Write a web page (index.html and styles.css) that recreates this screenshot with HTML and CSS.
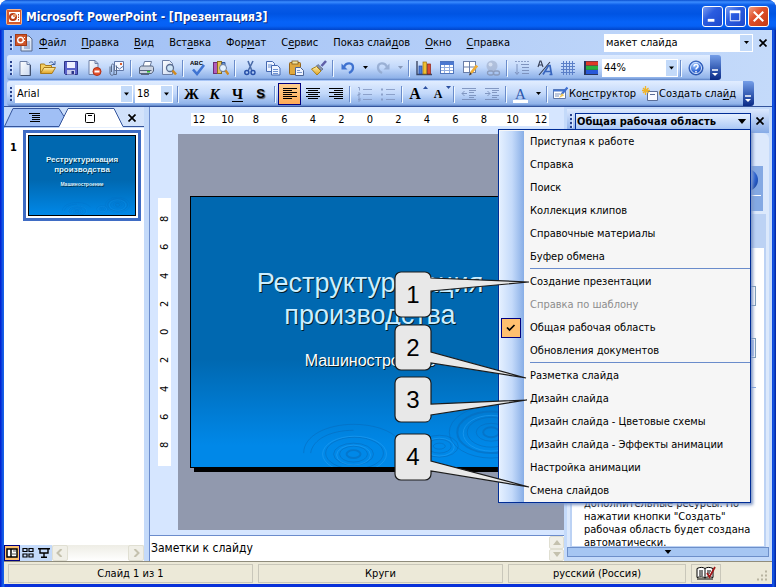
FILE: index.html
```html
<!DOCTYPE html>
<html lang="ru">
<head>
<meta charset="utf-8">
<title>Microsoft PowerPoint - [Презентация3]</title>
<link rel="stylesheet" href="styles.css">
</head>
<body>
<svg class="defs" aria-hidden="true">
  <defs>
    <linearGradient id="paper" x1="0" y1="0" x2="1" y2="1"><stop offset="0" stop-color="#fff"/><stop offset="1" stop-color="#c9d8f0"/></linearGradient>
    <linearGradient id="gold" x1="0" y1="0" x2="0" y2="1"><stop offset="0" stop-color="#fff0a8"/><stop offset="1" stop-color="#e0a020"/></linearGradient>
    <radialGradient id="ball" cx=".4" cy=".3" r=".8"><stop offset="0" stop-color="#9cc4ff"/><stop offset=".6" stop-color="#2c62d0"/><stop offset="1" stop-color="#123c98"/></radialGradient>
    <symbol id="down" viewBox="0 0 5 3"><path d="M0 0h5L2.500 3z"/></symbol>
    <symbol id="close" viewBox="0 0 8 8"><path d="M.5.5l7 7M7.500.5l-7 7" stroke="#000" stroke-width="1.700"/></symbol>
    <symbol id="ripples" viewBox="0 0 360 272" preserveAspectRatio="none">
      <g fill="none" stroke="#0869b8" stroke-opacity=".55">
        <ellipse cx="163" cy="259" rx="7" ry="4" stroke-width="2"/><ellipse cx="163" cy="259" rx="14" ry="8"/><ellipse cx="163" cy="259" rx="20" ry="11"/><ellipse cx="164" cy="258" rx="29" ry="16"/>
        <path d="M113 258c0-18 24-29 50-29 20 0 38 6 46 16"/><path d="M120 258c2-14 20-23 43-23"/>
        <ellipse cx="249" cy="251" rx="6" ry="3"/><ellipse cx="249" cy="251" rx="12" ry="7"/><ellipse cx="249" cy="251" rx="19" ry="11"/>
        <ellipse cx="301" cy="237" rx="8" ry="5" stroke-width="2"/><ellipse cx="301" cy="237" rx="15" ry="9"/><ellipse cx="301" cy="237" rx="24" ry="15"/><ellipse cx="301" cy="237" rx="34" ry="21" stroke-width="2"/><ellipse cx="301" cy="237" rx="42" ry="26"/>
      </g>
      <g fill="none" stroke="#2ba2f5" stroke-opacity=".5">
        <ellipse cx="163" cy="260" rx="17" ry="10"/><ellipse cx="164" cy="259" rx="32" ry="18"/><ellipse cx="301" cy="238" rx="28" ry="18"/><ellipse cx="249" cy="252" rx="15" ry="9"/>
      </g>
    </symbol>
  </defs>
</svg>

<div class="window">
  <header class="titlebar">
    <svg class="app-icon" viewBox="0 0 16 16"><rect x=".5" y=".5" width="15" height="15" rx="1" fill="#d65a2c" stroke="#f6b68c"/><rect x="3" y="3" width="11" height="10" fill="#fff"/><circle cx="7" cy="8" r="3" fill="#fff" stroke="#b63c18" stroke-width="2"/><path d="M7 8V5h3v3z" fill="#e89060"/><path d="M12.500 5v1.500M12.500 7.500V9M12.500 10v1.500" stroke="#b63c18"/></svg>
    <h1>Microsoft PowerPoint - [Презентация3]</h1>
    <div class="window-buttons">
      <button aria-label="Свернуть"><svg viewBox="0 0 20 20"><path d="M5 14h7" stroke="#fff" stroke-width="3"/></svg></button>
      <button aria-label="Развернуть"><svg viewBox="0 0 20 20"><path d="M4.500 4v10.500h10V4" fill="none" stroke="#fff"/><path d="M4 5h11" stroke="#fff" stroke-width="3"/></svg></button>
      <button class="quit" aria-label="Закрыть"><svg viewBox="0 0 20 20"><path d="M5 5l10 10M15 5L5 15" stroke="#fff" stroke-width="2.200"/></svg></button>
    </div>
  </header>

  <nav class="menubar">
    <i class="grip"></i>
    <svg class="doc-icon" viewBox="0 0 18 18"><path d="M6 2h8l3 3v12H6z" fill="url(#paper)" stroke="#56688c"/><path d="M9 12h6M9 14h6M12 8h3M12 10h3" stroke="#7088b8"/><rect x=".5" y=".5" width="11" height="11" fill="#cf5428" stroke="#a23a18"/><circle cx="5.500" cy="6" r="2.800" fill="none" stroke="#fff" stroke-width="1.400"/><path d="M9.500 3v1M9.500 6v1" stroke="#fff"/></svg>
    <div class="menus">
      <button><u>Ф</u>айл</button><button><u>П</u>равка</button><button><u>В</u>ид</button><button>Вст<u>а</u>вка</button><button>Фор<u>м</u>ат</button><button>С<u>е</u>рвис</button><button>Показ слай<u>д</u>ов</button><button><u>О</u>кно</button><button><u>С</u>правка</button>
    </div>
    <span class="combo ask"><input type="text" value="макет слайда" aria-label="Введите вопрос"><button aria-label="Открыть список"><svg class="arrow"><use href="#down"/></svg></button></span>
    <button class="close" aria-label="Закрыть окно"><svg><use href="#close"/></svg></button>
  </nav>

  <div class="toolbar">
    <div class="strip">
      <i class="grip"></i>
      <button aria-label="Создать"><svg viewBox="0 0 16 16"><path d="M3 1.500h7l3 3v11H3z" fill="url(#paper)" stroke="#6c7fa6"/><path d="M10 1.500v3h3" fill="#dfe8f8" stroke="#6c7fa6"/><path d="M13.500 5v10.500H4" fill="none" stroke="#40506e"/></svg></button>
      <button aria-label="Открыть"><svg viewBox="0 0 16 16"><path d="M.5 13V4h4l1 1.500h6V8" fill="#f4cf62" stroke="#a87a1c"/><path d="M.5 13.500L4 7.500h11.500L12 13.500z" fill="url(#gold)" stroke="#a87a1c"/><path d="M9 3c2-2 4-1 5 1m1-3v3.500h-3.500" fill="none" stroke="#3c5c9c"/></svg></button>
      <button aria-label="Сохранить"><svg viewBox="0 0 16 16"><path d="M1.500 1.500h13v13h-12l-1-1z" fill="#5a62c8" stroke="#2c3488"/><rect x="4" y="2" width="8" height="6" fill="#eef0ff"/><rect x="4" y="10" width="8" height="4.500" fill="#c8ccec"/><rect x="8.500" y="11" width="2.500" height="3" fill="#2c3488"/></svg></button>
      <button aria-label="Разрешения"><svg viewBox="0 0 16 16"><path d="M3 .5h6l3 3v11H3z" fill="url(#paper)" stroke="#6c7fa6"/><path d="M9 .5v3h3" fill="none" stroke="#6c7fa6"/><circle cx="11" cy="11.500" r="4" fill="#e4502c" stroke="#b03014"/><path d="M8.500 11.500h5" stroke="#fff" stroke-width="2"/></svg></button>
      <button aria-label="Сообщение"><svg viewBox="0 0 16 16"><path d="M5.500 1.500h9v9h-9z" fill="#f4f7ff" stroke="#6078a8"/><rect x="11" y="3" width="2" height="2" fill="#d86030"/><path d="M6.500 6l4 3 4-3" fill="none" stroke="#6078a8"/><path d="M1 6.500v6.500c0 3 4 3 4 0V5.500c0-2-2.500-2-2.500 0V12M5 14.500h2.500V5.500" fill="none" stroke="#596a88"/></svg></button>
      <i class="sep"></i>
      <button aria-label="Печать"><svg viewBox="0 0 16 16"><path d="M5 6.500L6.500 1.500h7L12 6.500" fill="#fff" stroke="#66789c"/><path d="M1.500 7.500l2-1.500h11l1 1.500V11l-2 2.500h-12z" fill="#ccd4e2" stroke="#56647e"/><path d="M2 10.500h11.500" stroke="#56647e"/><rect x="9" y="11" width="3" height="1.500" fill="#35c030"/><path d="M3 14.500h8" stroke="#56647e"/></svg></button>
      <button aria-label="Просмотр"><svg viewBox="0 0 16 16"><path d="M1.500.5h7l3 3v11h-10z" fill="url(#paper)" stroke="#6c7fa6"/><circle cx="9" cy="8" r="3.500" fill="#cfe6f8" stroke="#5a6c90" stroke-width="1.300"/><path d="M11.500 10.500l3.500 4" stroke="#d08a20" stroke-width="2.600"/></svg></button>
      <i class="sep"></i>
      <button aria-label="Орфография"><svg viewBox="0 0 16 16"><text x="0" y="5" class="abc">ABC</text><path d="M3 9.500l4 4.500 7-9" fill="none" stroke="#3f74d2" stroke-width="2.600"/></svg></button>
      <button aria-label="Справочные материалы"><svg viewBox="0 0 16 16"><rect x=".5" y="2.500" width="4" height="11" fill="#b25cb8" stroke="#6c2c78"/><rect x="4.500" y="1.500" width="4" height="12" fill="#e6c35c" stroke="#8c6c18"/><path d="M9 2.500h3v9H9z" fill="#6c98dc" stroke="#345a9c"/><circle cx="10" cy="8" r="3.500" fill="#e4f2ff" stroke="#6d7e9c"/><path d="M12.500 10.500l3 4" stroke="#d08a20" stroke-width="2.400"/></svg></button>
      <i class="sep"></i>
      <button aria-label="Вырезать"><svg viewBox="0 0 16 16"><path d="M6 1l4 10M11 1L6 11" stroke="#4c6ca8" stroke-width="1.600"/><circle cx="4.800" cy="12.500" r="2" fill="none" stroke="#2850a8" stroke-width="1.500"/><circle cx="11" cy="12.500" r="2" fill="none" stroke="#2850a8" stroke-width="1.500"/></svg></button>
      <button aria-label="Копировать"><svg viewBox="0 0 16 16"><path d="M1.500 1.500h6l2 2v8h-8z" fill="#eef4ff" stroke="#4468b0"/><path d="M3 5h4M3 7h4" stroke="#6c90d0"/><path d="M6.500 5.500h6l2.500 2.500v7H6.500z" fill="#eef4ff" stroke="#4468b0"/><path d="M8 9.500h5M8 11.500h5M8 13.500h5" stroke="#6c90d0"/></svg></button>
      <button aria-label="Вставить"><svg viewBox="0 0 16 16"><rect x="1.500" y="2.500" width="11" height="12" rx="1" fill="#e0a83c" stroke="#94641c"/><rect x="4" y="1" width="6" height="3" fill="#f4e6a0" stroke="#7c5a20" stroke-width=".8"/><path d="M7.500 7.500h5l3 3v5h-8z" fill="#edf3ff" stroke="#4c6494"/><path d="M9 10.500h3M9 12.500h5" stroke="#7c98cc"/></svg></button>
      <button aria-label="Формат по образцу"><svg viewBox="0 0 16 16"><path d="M15 1l-4.500 5" stroke="#5f5fa8" stroke-width="2.600"/><path d="M7 4.500l5 4.500-1.500 1.500L5.500 6z" fill="#8893ac" stroke="#56607c" stroke-width=".7"/><path d="M5.500 6.500l4.500 4.500-4 4L.5 9z" fill="url(#gold)" stroke="#a8821c"/></svg></button>
      <i class="sep"></i>
      <button aria-label="Отменить"><svg viewBox="0 0 16 16"><path d="M4 7c2-5 9-5 9 .5 0 3-2 4.500-4 5.500" fill="none" stroke="#3f72d0" stroke-width="2.300"/><path d="M1.500 3.500v6h6z" fill="#3f72d0"/></svg></button>
      <button class="drop" aria-label="Список отмены"><svg class="arrow"><use href="#down"/></svg></button>
      <button class="dim" aria-label="Вернуть"><svg viewBox="0 0 16 16"><path d="M12 7c-2-5-9-5-9 .5 0 3 2 4.500 4 5.500" fill="none" stroke="#8fa6cc" stroke-width="2.300"/><path d="M14.500 3.500v6h-6z" fill="#8fa6cc"/></svg></button>
      <button class="drop dim" aria-label="Список возврата"><svg class="arrow"><use href="#down"/></svg></button>
      <i class="sep"></i>
      <button aria-label="Диаграмма"><svg viewBox="0 0 16 16"><path d="M1 1v13.500h15" fill="none" stroke="#3b4664" stroke-width="1.400"/><rect x="3" y="6" width="3" height="8" fill="#4a7cdc" stroke="#254a98" stroke-width=".7"/><rect x="7" y="2" width="3.500" height="12" fill="#f0c030" stroke="#987010" stroke-width=".7"/><rect x="11.500" y="4" width="3" height="10" fill="#dc4c30" stroke="#902010" stroke-width=".7"/></svg></button>
      <button aria-label="Таблица"><svg viewBox="0 0 16 16"><rect x="1.500" y="1.500" width="13" height="12" fill="#fff" stroke="#4f75bd"/><path d="M1 3.500h14" stroke="#4b78d0" stroke-width="3"/><path d="M2 7.500h12M2 10.500h12M5.500 5v8M10.500 5v8" stroke="#8fabdf"/></svg></button>
      <button aria-label="Таблицы и границы"><svg viewBox="0 0 16 16"><rect x="1.500" y="1.500" width="12" height="11" fill="#fff" stroke="#6a7ea8"/><path d="M7.500 1v12M1 7h13" stroke="#6a7ea8"/><path d="M15 5.500L9 13" stroke="#efac34" stroke-width="2.800"/><path d="M7 15.500l1-3 2 1.500z" fill="#443018"/></svg></button>
      <button class="dim" aria-label="Гиперссылка"><svg viewBox="0 0 16 16"><circle cx="7" cy="6" r="5.500" fill="#a9b8d4"/><circle cx="5.500" cy="4.500" r="2" fill="#d6dfef"/><rect x="2.500" y="11" width="6" height="4" rx="2" fill="none" stroke="#8492b0" stroke-width="1.300"/><rect x="8.500" y="11" width="6" height="4" rx="2" fill="none" stroke="#8492b0" stroke-width="1.300"/></svg></button>
      <i class="sep"></i>
      <button aria-label="Развернуть все"><svg viewBox="0 0 16 16"><path d="M1 1.500h14" stroke="#8ca0c8" stroke-dasharray="2 1"/><path d="M3 4v10M1 12l2 2.500 2-2.500M7 4.500h8M8 7.500h7M8 10.500h7M8 13.500h7" fill="none" stroke="#7e93be"/></svg></button>
      <button aria-label="Показать форматирование"><svg viewBox="0 0 16 16"><path d="M1 7l2-6h1l2 6M2 5h3M2 15L13 2" fill="none" stroke="#333c54" stroke-width="1.100"/><path d="M6 14.500l5.500-9h1.500l1.500 9M8 11.500h6M12.500 14.500h3" fill="none" stroke="#3765be" stroke-width="1.700"/></svg></button>
      <button aria-label="Сетка"><svg viewBox="0 0 16 16"><path d="M3.500 1v14M6.500 1v14M9.500 1v14M12.500 1v14M1 3.500h14M1 6.500h14M1 9.500h14M1 12.500h14" stroke="#5b7fc8"/></svg></button>
      <button aria-label="Цвет и оттенки серого"><svg viewBox="0 0 16 16"><rect x="1" y="1" width="14" height="14" fill="#26355c"/><path d="M3 3.500h12" stroke="#e03828" stroke-width="4"/><path d="M3 7.800h12" stroke="#28b040" stroke-width="4"/><path d="M3 12h12" stroke="#2858d8" stroke-width="4"/></svg></button>
      <span class="combo zoom"><select aria-label="Масштаб"><option>44%</option></select><svg class="arrow"><use href="#down"/></svg></span>
      <i class="sep"></i>
      <button aria-label="Справка"><svg viewBox="0 0 16 16"><circle cx="8" cy="8" r="7" fill="url(#ball)" stroke="#2c58b0"/><circle cx="8" cy="8" r="5.500" fill="none" stroke="#dce9ff"/><path d="M6 6.500c0-3 4.500-2.500 4 0-.3 1.500-2 1.300-2 3M8 11v1.500" fill="none" stroke="#fff" stroke-width="1.500"/></svg></button>
    </div>
    <button class="cap" aria-label="Параметры панели"><svg viewBox="0 0 7 8"><path d="M0 1h6" stroke="#fff" stroke-width="1.500"/><path d="M0 4h6L3 7z" fill="#fff"/></svg></button>
  </div>

  <div class="toolbar format">
    <div class="strip">
      <i class="grip"></i>
      <span class="combo font"><select aria-label="Шрифт"><option>Arial</option></select><svg class="arrow"><use href="#down"/></svg></span>
      <span class="combo size"><select aria-label="Размер"><option>18</option></select><svg class="arrow"><use href="#down"/></svg></span>
      <i class="sep"></i>
      <button class="letter">Ж</button><button class="letter"><em>К</em></button><button class="letter"><u>Ч</u></button><button class="letter shadow">S</button>
      <i class="sep"></i>
      <button class="on" aria-label="По левому краю"><svg viewBox="0 0 16 16"><path d="M1 2.500h14M1 4.500h9M1 6.500h14M1 8.500h9M1 10.500h14M1 12.500h9" stroke="#000"/></svg></button>
      <button aria-label="По центру"><svg viewBox="0 0 16 16"><path d="M1 2.500h14M3 4.500h10M1 6.500h14M3 8.500h10M1 10.500h14M3 12.500h10" stroke="#000"/></svg></button>
      <button aria-label="По правому краю"><svg viewBox="0 0 16 16"><path d="M1 2.500h14M6 4.500h9M1 6.500h14M6 8.500h9M1 10.500h14M6 12.500h9" stroke="#000"/></svg></button>
      <i class="sep"></i>
      <button class="dim" aria-label="Нумерация"><svg viewBox="0 0 16 16"><path d="M6 3.500h9M6 8.500h9M6 13.500h9" stroke="#8095bf"/><path d="M1 1.500h1.500v3M1 7h2v1.500H1V10h2M1 12h2v3H1M1 13.500h2" fill="none" stroke="#8095bf"/></svg></button>
      <button class="dim" aria-label="Маркеры"><svg viewBox="0 0 16 16"><path d="M6 3.500h9M6 8.500h9M6 13.500h9" stroke="#8095bf"/><path d="M1 3.500h2M1 8.500h2M1 13.500h2" stroke="#8095bf" stroke-width="2"/></svg></button>
      <i class="sep"></i>
      <button class="letter big">A<svg viewBox="0 0 5 3"><path d="M0 3h5L2.500 0z" fill="#2c50a0"/></svg></button>
      <button class="letter small">A<svg viewBox="0 0 5 3"><path d="M0 0h5L2.500 3z" fill="#2c50a0"/></svg></button>
      <i class="sep"></i>
      <button class="dim" aria-label="Уменьшить отступ"><svg viewBox="0 0 16 16"><path d="M1 2.500h14M8 4.500h7M8 6.500h5M8 9.500h7M8 11.500h5M1 13.500h14M6 7.500H1M3.500 5L1 7.500 3.500 10" fill="none" stroke="#7288b4"/></svg></button>
      <button class="dim" aria-label="Увеличить отступ"><svg viewBox="0 0 16 16"><path d="M1 2.500h14M8 4.500h7M8 6.500h5M8 9.500h7M8 11.500h5M1 13.500h14M1 7.500h5M3.500 5L6 7.500 3.500 10" fill="none" stroke="#7288b4"/></svg></button>
      <i class="sep"></i>
      <button class="letter ink">A</button>
      <button class="drop" aria-label="Цвет текста"><svg class="arrow"><use href="#down"/></svg></button>
      <i class="sep"></i>
      <button class="wide"><svg viewBox="0 0 16 16"><path d="M1.500 3.500h12v9h-12z" fill="#fff" stroke="#6078a8"/><path d="M1 4.500h13" stroke="#4878d0" stroke-width="2"/><path d="M3 8h5M3 10h4" stroke="#7c90b8"/><path d="M15.500 1.500L9 9" stroke="#3f6fd0" stroke-width="2.200"/><path d="M10 7l-3 5 5-2.500z" fill="#f0c858"/></svg><span>Ко<u>н</u>структор</span></button>
      <button class="wide"><svg viewBox="0 0 16 16"><path d="M5.500 5.500h10v9h-10z" fill="#f8faff" stroke="#5b6e98"/><path d="M8 8.500h5" stroke="#5b6e98"/><path d="M3.500 0v9M0 4.500h8M1 2l5.500 5M6.500 2L1 7" stroke="#f0b428" stroke-width="1.300"/></svg><span>Создать сла<u>й</u>д</span></button>
    </div>
    <button class="cap" aria-label="Параметры панели"><svg viewBox="0 0 7 8"><path d="M0 1h6" stroke="#fff" stroke-width="1.500"/><path d="M0 4h6L3 7z" fill="#fff"/></svg></button>
  </div>

  <main class="workspace">
    <section class="outline">
      <div class="tabs">
        <svg class="tab-shape" viewBox="0 0 140 20" preserveAspectRatio="none"><path d="M0 19.500L9 .5h46l5 8-5 11z" fill="#a0bff5"/><path d="M0 19.500L9 .5h46l5 8" fill="none" stroke="#34549c"/><path d="M55 19.500L63.500.5H110l9 19z" fill="#fff"/><path d="M0 18.500h55L64 .5h46l9 18h21" fill="none" stroke="#34549c"/></svg>
        <button class="tab" aria-label="Структура"><svg viewBox="0 0 12 10"><path d="M0 .5h11M3 2.500h8M3 4.500h8M3 6.500h8M1 8.500h10" stroke="#000"/></svg></button>
        <button class="tab" aria-label="Слайды"><svg viewBox="0 0 12 10"><rect x="1.500" y=".5" width="9" height="9" rx="1" fill="none" stroke="#000"/><path d="M4 2.500h4" stroke="#000"/></svg></button>
        <button class="close" aria-label="Закрыть область"><svg><use href="#close"/></svg></button>
      </div>
      <div class="thumbs">
        <b>1</b>
        <div class="thumb">
          <svg class="backdrop"><use href="#ripples"/></svg>
          <p>Реструктуризация производства</p>
          <small>Машиностроение</small>
        </div>
      </div>
      <div class="views">
        <button class="on" aria-label="Обычный режим"><svg viewBox="0 0 12 10"><path d="M1 1h10v8H1zM5 1v8" fill="#fff" stroke="#000" stroke-width="1.500"/><path d="M5 6h6M7 3h3" stroke="#555"/></svg></button>
        <button aria-label="Сортировщик"><svg viewBox="0 0 12 10"><path d="M1 .5h4v3H1zM7 .5h4v3H7zM1 6h4v3H1zM7 6h4v3H7z" fill="none" stroke="#000" stroke-width="1.200"/></svg></button>
        <button aria-label="Показ слайдов"><svg viewBox="0 0 12 10"><path d="M0 .7h12M2 1v4h8V1M6 5v4M3 9.300h6" fill="none" stroke="#000" stroke-width="1.400"/></svg></button>
        <div class="hscroll">
          <button aria-label="Влево"><svg viewBox="0 0 8 8"><path d="M5.500 0l-4 4 4 4" fill="none" stroke="#c4c1ae" stroke-width="2"/></svg></button>
          <button aria-label="Вправо"><svg viewBox="0 0 8 8"><path d="M2.500 0l4 4-4 4" fill="none" stroke="#c4c1ae" stroke-width="2"/></svg></button>
        </div>
      </div>
    </section>

    <section class="editor">
      <div class="ruler-x"><div class="scale"><span>12</span><span>10</span><span>8</span><span>6</span><span>4</span><span>2</span><span>0</span><span>2</span><span>4</span><span>6</span><span>8</span><span>10</span><span>12</span></div></div>
      <div class="ruler-y"><div class="scale"><span>8</span><span>6</span><span>4</span><span>2</span><span>0</span><span>2</span><span>4</span><span>6</span><span>8</span></div></div>
      <div class="stage">
        <article class="slide">
          <svg class="backdrop"><use href="#ripples"/></svg>
          <h2>Реструктуризация<br>производства</h2>
          <p>Машиностроение</p>
        </article>
      </div>
      <div class="notes">
        <textarea aria-label="Заметки">Заметки к слайду</textarea>
        <div class="vscroll">
          <button aria-label="Вверх"><svg viewBox="0 0 8 5"><path d="M0 5h8L4 0z" fill="#c4c1ae"/></svg></button>
          <button aria-label="Вниз"><svg viewBox="0 0 8 5"><path d="M0 0h8L4 5z" fill="#c4c1ae"/></svg></button>
        </div>
      </div>
    </section>

    <aside class="task">
      <div class="task-head">
        <i class="grip"></i>
        <div class="anchor">
          <button class="task-title" aria-expanded="true"><span>Общая рабочая область</span><svg><use href="#down"/></svg></button>
          <ul class="dropdown" role="menu">
            <li><button role="menuitem">Приступая к работе</button></li>
            <li><button role="menuitem">Справка</button></li>
            <li><button role="menuitem">Поиск</button></li>
            <li><button role="menuitem">Коллекция клипов</button></li>
            <li><button role="menuitem">Справочные материалы</button></li>
            <li><button role="menuitem">Буфер обмена</button></li>
            <li class="rule"><button role="menuitem">Создание презентации</button></li>
            <li><button role="menuitem" disabled>Справка по шаблону</button></li>
            <li class="checked"><svg viewBox="0 0 20 20"><rect x=".5" y=".5" width="19" height="19" fill="#ffc06f" stroke="#000080"/><path d="M6 9.500l2.500 2.500 5-5" fill="none" stroke="#000" stroke-width="1.700"/></svg><button role="menuitem">Общая рабочая область</button></li>
            <li><button role="menuitem">Обновления документов</button></li>
            <li class="rule"><button role="menuitem">Разметка слайда</button></li>
            <li><button role="menuitem">Дизайн слайда</button></li>
            <li><button role="menuitem">Дизайн слайда - Цветовые схемы</button></li>
            <li><button role="menuitem">Дизайн слайда - Эффекты анимации</button></li>
            <li><button role="menuitem">Настройка анимации</button></li>
            <li><button role="menuitem">Смена слайдов</button></li>
          </ul>
          <svg class="callouts" viewBox="0 0 140 215">
            <g fill="#e8e8e8" stroke="#1c1c1c" stroke-width="1.200">
              <path d="M7 1h24a6 6 0 0 1 6 6l98 4-98 9v20a6 6 0 0 1-6 6H7a6 6 0 0 1-6-6V7a6 6 0 0 1 6-6z"/>
              <path d="M7 54h24a6 6 0 0 1 6 6v21l95 26-95-15v1a6 6 0 0 1-6 6H7a6 6 0 0 1-6-6V60a6 6 0 0 1 6-6z"/>
              <path d="M7 106h24a6 6 0 0 1 6 6v21l96-4-96 15v2a6 6 0 0 1-6 5H7a6 6 0 0 1-6-6v-33a6 6 0 0 1 6-6z"/>
              <path d="M7 163h24a6 6 0 0 1 6 6v21l98 26-98-16v3a6 6 0 0 1-6 6H7a6 6 0 0 1-6-6v-34a6 6 0 0 1 6-6z"/>
            </g>
            <g class="digits"><text x="19" y="32">1</text><text x="19" y="85">2</text><text x="19" y="137">3</text><text x="19" y="194">4</text></g>
          </svg>
        </div>
        <button class="close" aria-label="Закрыть панель"><svg><use href="#close"/></svg></button>
      </div>
      <div class="task-body">
        <div class="banner"><svg viewBox="0 0 24 24"><circle cx="12" cy="12" r="11" fill="url(#ball)"/></svg><hr></div>
        <div class="card">
          <div class="card-head"></div>
          <div class="fields">
            <input type="text" aria-label="Имя рабочей области">
            <span class="combo place"><input type="text" aria-label="Расположение"><i></i></span>
            <hr>
          </div>
          <p>дополнительные ресурсы. По нажатии кнопки "Создать" рабочая область будет создана автоматически.</p>
        </div>
      </div>
      <button class="more" aria-label="Прокрутить вниз"><svg><use href="#down"/></svg></button>
    </aside>
  </main>

  <footer class="status">
    <span>Слайд 1 из 1</span><span>Круги</span><span class="lang">русский (Россия)</span>
    <span class="spell"><svg viewBox="0 0 20 14"><path d="M1 2.500c3-1.500 6-1.500 8 0 2-1.500 5-1.500 8 0v9c-3-1-6-1-8 .5-2-1.500-5-1.500-8-.5z" fill="#fff" stroke="#000"/><path d="M9 2.500V12M1 13h16M3 5h4M3 7h4M3 9h4M11 5h4M11 7h3" stroke="#000"/><path d="M11 7l2.500 4L19 1" fill="none" stroke="#a01818" stroke-width="1.800"/></svg></span>
    <svg class="resize" viewBox="0 0 12 12"><path d="M9 1.500h2M5 5.500h2M9 5.500h2M1 9.500h2M5 9.500h2M9 9.500h2" stroke="#b8b4a0" stroke-width="2"/></svg>
  </footer>
</div>
</body>
</html>
```
FILE: styles.css
```css
* { box-sizing: border-box; }
body { margin: 0; background: #fff; color: #000; font: 11px/13px "DejaVu Sans Condensed", "DejaVu Sans", sans-serif; }
button, input, select, textarea { font: inherit; color: inherit; margin: 0; padding: 0; border: 0; background: none; border-radius: 0; outline: 0; }
h1, h2, p, ul, hr { margin: 0; padding: 0; }
svg { display: block; flex: none; }
u { text-underline-offset: 2px; }
.defs { position: absolute; width: 0; height: 0; }

.window {
  display: grid;
  grid-template-rows: 30px 25px 26px 25px minmax(0, 1fr) 23px;
  height: 100vh;
  padding: 0 4px 3px;
  background: linear-gradient(90deg, #0019cf, #1660e8 3px, #1660e8 4px, #0831d9 5px, #0831d9 calc(100% - 4px), #1660e8 calc(100% - 3px), #001ea0);
  border-radius: 8px 8px 0 0;
  overflow: hidden;
}

/* Title bar */
.titlebar {
  display: flex;
  align-items: center;
  gap: 4px;
  margin: 0 -4px;
  padding: 3px 7px 0 6px;
  background: linear-gradient(#0a4fd0, #3b8cff 2px, #0a5ce8 5px, #0054e3 14px, #0663f8 22px, #0661f5 26px, #0144c8);
}
.app-icon { width: 16px; height: 16px; }
.titlebar h1 { flex: 1; color: #fff; font: bold 12px/18px "DejaVu Sans Condensed", sans-serif; text-shadow: 1px 1px #0a2a80; white-space: nowrap; }
.window-buttons { display: flex; gap: 2px; }
.window-buttons button { width: 21px; height: 21px; border: 1px solid #fff; border-radius: 3px; background: linear-gradient(135deg, #7a9cf0, #2a5ce0 40%, #1c48cc); }
.window-buttons .quit { background: linear-gradient(135deg, #f0a084, #e0502c 40%, #c43a14); }

/* Menu bar */
.menubar { display: flex; align-items: center; padding: 0 0 0 6px; background: linear-gradient(90deg, #9ebef5, #c4dafa); }
.grip { width: 3px; height: 14px; flex: none; background: repeating-linear-gradient(#27418c 0 2px, transparent 2px 4px); border-right: 1px solid #dce8ff; }
.doc-icon { width: 18px; height: 18px; margin-left: 2px; }
.menus { display: flex; flex: 1; gap: 15px; margin-left: 6px; white-space: nowrap; }
.close { display: grid; place-items: center; width: 18px; height: 18px; }
.close svg { width: 8px; height: 8px; }
.combo { position: relative; display: flex; height: 18px; background: #fff; flex: none; }
.combo input, .combo select { flex: 1; min-width: 0; padding-left: 2px; appearance: none; }
.combo > button, .combo > .arrow { background: #c3daf9; }
.combo > button { width: 12px; margin: 1px; display: grid; place-items: center; }
.combo > .arrow { position: absolute; right: 1px; top: 1px; bottom: 1px; width: 11px; height: 16px; padding: 0 3px; pointer-events: none; }
.arrow { width: 5px; height: 3px; }
.ask { width: 149px; margin-right: 1px; }

/* Toolbars */
.toolbar { display: flex; padding-left: 3px; background: linear-gradient(90deg, #9ebef5, #c4dafa); }
.strip { display: flex; align-items: center; height: 25px; padding: 0 3px; border-radius: 3px 0 0 3px; background: linear-gradient(#e1edff, #c2d8fa 50%, #8fb2e9 92%, #5a80c4); }
.strip > button { flex: none; width: 23px; height: 22px; display: grid; place-items: center; }
.strip > button > svg { width: 16px; height: 16px; }
.strip > .drop { width: 12px; }
.strip > .drop > svg { width: 5px; height: 3px; }
.strip > .dim { opacity: .8; }
.strip > .dim .arrow { fill: #7888a8; }
.sep { width: 1px; height: 16px; margin: 0 3px 0 2px; flex: none; background: #6a8ccb; box-shadow: 1px 1px #f1f9ff; }
.cap { width: 11px; height: 25px; display: grid; place-items: end center; padding-bottom: 3px; border-radius: 0 3px 3px 0; background: linear-gradient(#759ee8, #3a62b8 50%, #0a2a86); }
.cap svg { width: 7px; height: 8px; }
.abc { font: bold 6px "Liberation Sans", sans-serif; }
.zoom { width: 76px; }
.font { width: 118px; margin: 0 2px; }
.size { width: 38px; margin-right: 2px; }
.size + .sep { margin-right: 2px; }
.strip > .letter { position: relative; font: bold 15px/18px "Liberation Serif", serif; }
.strip > .shadow { font: bold 13px/18px "Liberation Sans", sans-serif; text-shadow: 1px 1px 1px #555; }
.strip > .big, .strip > .small { padding-right: 3px; }
.strip > .big { font-size: 16px; }
.strip > .small { font-size: 12px; }
.strip > .letter > svg { position: absolute; right: 0; top: 3px; width: 5px; height: 3px; }
.strip > .ink { height: 18px; font-weight: normal; line-height: 14px; color: #2e58ac; border: solid transparent; border-width: 0 4px; box-shadow: inset 0 -3px #fff; }
.strip > .on { border: 1px solid #000080; background: linear-gradient(#ffd090, #fea955); }
.strip > .wide { display: flex; width: auto; align-items: center; gap: 1px; padding: 0 4px 0 2px; white-space: nowrap; }

/* Workspace */
.workspace { display: grid; grid-template-columns: 140px minmax(0, 1fr) 208px; min-height: 0; background: #c4dafa; border-top: 1px solid #34549c; }
.outline { display: grid; grid-template-rows: 21px minmax(0, 1fr) 16px; background: #fff; min-width: 0; }
.tabs { position: relative; display: flex; align-items: center; padding-top: 1px; background: linear-gradient(90deg, #c4dafa, #d3e3fb); }
.tabs > button { position: relative; }
.tab-shape { position: absolute; inset: 1px 0 0; width: 100%; height: 20px; }
.tab { width: 55px; display: grid; place-items: center; padding-left: 7px; }
.tab svg { width: 12px; height: 10px; }
.tabs .close { margin-left: 9px; }
.thumbs { display: flex; align-items: flex-start; gap: 7px; padding: 2px 0 0 6px; }
.thumbs b { width: 6px; margin-top: 11px; }
.thumb { position: relative; width: 118px; height: 91px; padding-top: 20px; border: 3px solid #3f6cc4; outline: 1px solid #000; outline-offset: -6px; background: linear-gradient(#0068b0 55%, #0088e8) 50% / 106px 79px no-repeat #fff; color: #dff4ff; text-align: center; font: bold 8px/10px "Liberation Sans", sans-serif; text-shadow: 1px 1px #00304c; }
.thumb .backdrop { left: 3px; top: 3px; width: 106px; height: 79px; }
.thumb p { position: relative; width: 76px; margin: 2px auto 5px; }
.thumb small { position: relative; display: block; font-size: 5px; line-height: 8px; }
.backdrop { position: absolute; inset: 0; width: 100%; height: 100%; }
.views { display: flex; }
.views > button { width: 16px; display: grid; place-items: center; background: #c4dafa; }
.views > .on { border: 1px solid #000080; background: #ffc06f; }
.views > button svg { width: 12px; height: 10px; }
.hscroll { display: flex; flex: 1; justify-content: space-between; background: linear-gradient(#eeede5, #fff); }
.hscroll button, .vscroll button { display: grid; place-items: center; border: 1px solid #e0dfd2; border-radius: 2px; background: #f0efe7; }
.hscroll button { width: 16px; }
.hscroll svg { width: 8px; height: 8px; }

.editor { display: grid; grid-template: 27px minmax(0, 1fr) 31px / 28px minmax(0, 1fr); margin-left: 5px; border-left: 1px solid #6b8ccc; background: #d6e6ff; min-width: 0; }
.scale { display: flex; justify-content: space-between; background: #fff; }
.scale span { width: 16px; height: 16px; line-height: 14px; text-align: center; }
.ruler-x { grid-column: 2; display: grid; place-content: center; padding: 0 2px 2px 0; }
.ruler-x .scale { width: 358px; height: 13px; }
.ruler-y { display: grid; place-content: center; }
.ruler-y .scale { flex-direction: column; width: 13px; height: 268px; padding: 13px 0; }
.ruler-y span { writing-mode: vertical-rl; transform: rotate(180deg); width: 13px; line-height: 13px; }
.stage { display: grid; place-content: center; padding-right: 2px; background: #9199ae; overflow: hidden; }
.slide { position: relative; width: 361px; height: 272px; padding-top: 70px; border: 1px solid #000; background: linear-gradient(#0068b0 60%, #007cd4 80%, #0088e8 92%); box-shadow: 4px 4px #000; text-align: center; font-family: "Liberation Sans", sans-serif; }
.slide h2 { position: relative; color: #cceeff; font-size: 27px; font-weight: normal; line-height: 32px; text-shadow: 1px 1px #00202c; }
.slide p { position: relative; margin-top: 20px; color: #fff; font-size: 16px; line-height: 20px; text-shadow: 1px 1px #00202c; }
.notes { grid-column: 1 / -1; display: flex; margin-top: 5px; border-top: 1px solid #6b8ccc; background: #fff; }
.notes textarea { flex: 1; padding: 5px 1px; font-size: 12px; line-height: 14px; resize: none; overflow: hidden; }
.vscroll { display: grid; width: 15px; }
.vscroll svg { width: 8px; height: 5px; }

/* Task pane */
.task { display: flex; flex-direction: column; min-width: 0; padding: 2px 3px 4px; background: #c4dafa; }
.task-head { display: flex; align-items: center; height: 24px; padding-left: 3px; background: linear-gradient(#dce9ff, #86abe6); }
.anchor { position: relative; z-index: 2; flex: 1; margin-left: 2px; }
.task-title { display: flex; align-items: center; justify-content: space-between; width: 100%; height: 17px; padding: 0 3px 0 1px; border: 1px solid #002d96; border-bottom: 0; background: linear-gradient(#e6f0ff, #a8c6f5); font-weight: bold; white-space: nowrap; }
.task-title svg { width: 10px; height: 5px; }
.dropdown { position: absolute; top: 16px; right: 0; width: 253px; padding: 0 0 0 1px; list-style: none; border: 1px solid #002d96; background: linear-gradient(90deg, #e3efff, #c4dafa 50%, #88aee6) 1px 1px / 24px 100% no-repeat #f6f6f6; box-shadow: 2px 2px 3px #7e96c4; }
.dropdown li { position: relative; padding-left: 30px; }
.dropdown button { display: block; width: 100%; height: 23px; text-align: left; white-space: nowrap; }
.dropdown button:disabled { color: #8d8d8d; }
.dropdown .rule::before { content: ""; display: block; height: 1px; margin-bottom: 1px; background: #6a8ccb; }
.checked svg { position: absolute; left: 1px; top: 2px; width: 20px; height: 20px; }
.callouts { position: absolute; top: 158px; right: 217px; width: 140px; height: 215px; overflow: visible; pointer-events: none; }
.digits { font: 24px "Liberation Sans", sans-serif; text-anchor: middle; }
.task-body { flex: 1; min-height: 0; display: flex; flex-direction: column; padding: 33px 3px 0; background: #dce9fc; border-radius: 0 6px 0 0; }
.banner { height: 45px; flex: none; margin: 0 3px; padding: 2px 2px 0; background: #84a9e3; }
.banner svg { width: 24px; height: 24px; margin-left: auto; margin-right: 2px; }
.banner hr { margin-top: 3px; border: 0; border-top: 1px solid #fff; }
.card { flex: 1; min-height: 0; display: flex; flex-direction: column; justify-content: space-between; margin-top: 3px; border: solid #bcd2f4; border-width: 1px 2px; background: #fff; overflow: hidden; }
.card-head { height: 33px; flex: none; background: #bcd2f4; }
.fields { flex: 1; padding: 38px 8px 0; }
.fields > input, .place { display: flex; width: 100%; height: 20px; border: 1px solid #7f9db9; }
.place { margin-top: 32px; }
.place i { width: 14px; margin: 1px; background: #b8cdf8; }
.fields hr { margin-top: 29px; border: 0; border-top: 1px solid #84a9e3; }
.card p { margin-bottom: -3px; padding: 0 4px 0 12px; }
.more { display: grid; place-items: center; height: 10px; flex: none; border: 1px solid #6d8fc9; background: #a6c6f2; }
.more svg { width: 8px; height: 4px; }

/* Status bar */
.status { display: flex; align-items: center; gap: 5px; padding: 2px 4px; border-top: 1px solid #8f8c7c; background: #ece9d8; }
.status span { flex: 1; height: 19px; line-height: 17px; text-align: center; border: 1px solid #c9c7ba; }
.status .lang { flex: 0 0 178px; }
.status .spell { flex: 0 0 30px; display: grid; place-items: center; }
.spell svg { width: 20px; height: 14px; }
.resize { width: 12px; height: 12px; margin-left: 30px; align-self: flex-end; }
```
